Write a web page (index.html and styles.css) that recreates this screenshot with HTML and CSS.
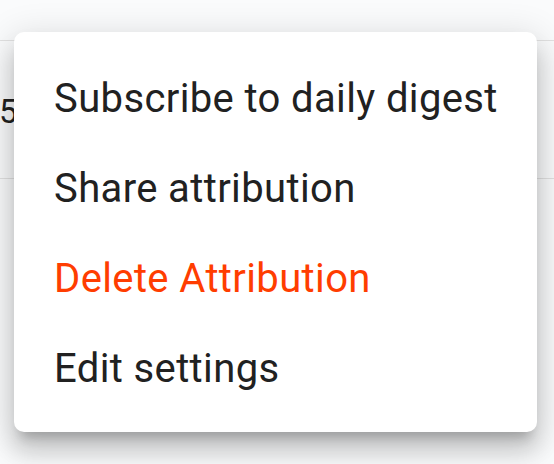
FILE: index.html
```html
<!DOCTYPE html>
<html>
<head>
<meta charset="utf-8">
<link rel="stylesheet" href="styles.css">
</head>
<body>
<div class="page">
  <div class="table">
    <div class="row"><div class="cell">5</div></div>
  </div>
</div>
<div class="menu">
  <div class="item">Subscribe to daily digest</div>
  <div class="item">Share attribution</div>
  <div class="item danger">Delete Attribution</div>
  <div class="item">Edit settings</div>
</div>
</body>
</html>
```
FILE: styles.css
```css
html, body {
  margin: 0;
  padding: 0;
}
body {
  width: 554px;
  height: 464px;
  overflow: hidden;
  background: #fafbfc;
  font-family: Roboto, "Noto Sans", sans-serif;
  position: relative;
}
.page {
  padding-top: 40px;
}
.table {
  border-top: 1px solid #e2e2e2;
}
.row {
  height: 137px;
  border-bottom: 1px solid #e2e2e2;
  display: flex;
  align-items: center;
}
.cell {
  width: 18px;
  margin-left: -1px;
  font-size: 33px;
  color: #212121;
  white-space: nowrap;
  padding-top: 4px;
}
.menu {
  position: absolute;
  left: 14px;
  top: 32px;
  width: 523px;
  box-sizing: border-box;
  padding: 22px 0 18px;
  background: #ffffff;
  border-radius: 10px;
  box-shadow:
    0 12px 12px -7px rgba(0, 0, 0, 0.2),
    0 20px 25px 2px rgba(0, 0, 0, 0.14),
    0 7px 35px 5px rgba(0, 0, 0, 0.12);
}
.item {
  height: 90px;
  line-height: 90px;
  padding: 0 40px;
  font-size: 40px;
  letter-spacing: 0.375px;
  color: #212121;
  white-space: nowrap;
}
.item.danger {
  color: #ff3d00;
}
```
